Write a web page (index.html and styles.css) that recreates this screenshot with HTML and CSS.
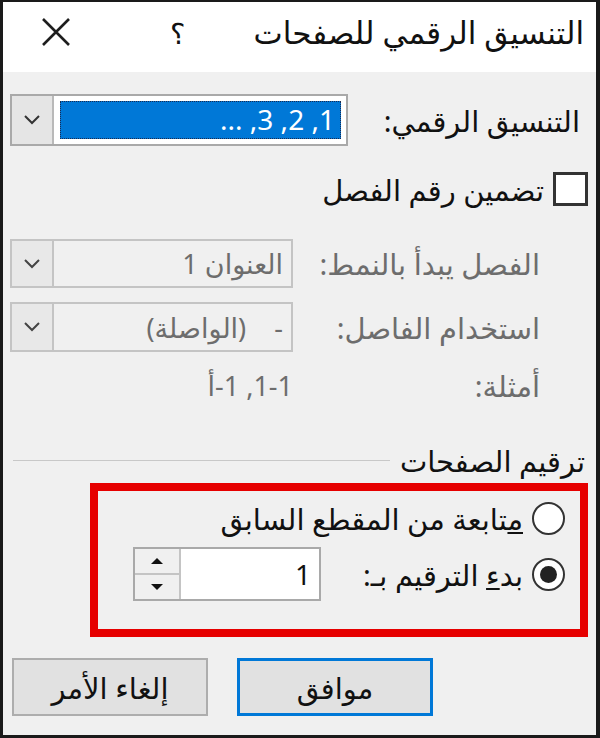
FILE: index.html
```html
<!DOCTYPE html>
<html lang="ar" dir="rtl">
<head>
<meta charset="utf-8">
<title>التنسيق الرقمي للصفحات</title>
<link rel="stylesheet" href="styles.css">
</head>
<body>
<div class="dialog">
  <div class="titlebar">
    <div class="title">التنسيق الرقمي للصفحات</div>
    <div class="tb-actions">
      <span class="help">؟</span>
      <span class="close">
        <svg width="30" height="30" viewBox="0 0 30 30"><path d="M2 2 L28 28 M28 2 L2 28" stroke="#1e1e1e" stroke-width="2.6" fill="none"/></svg>
      </span>
    </div>
  </div>
  <div class="content">
    <div class="row row-format">
      <span class="lbl lbl-main">التنسيق الرقمي:</span>
      <div class="combo combo-wide">
        <div class="combo-field"><span class="sel">1, 2, 3, ...</span></div>
        <div class="combo-btn"><svg width="18" height="12" viewBox="0 0 18 12"><path d="M2 2 L9 9 L16 2" stroke="#333" stroke-width="2" fill="none"/></svg></div>
      </div>
    </div>
    <div class="row check-row">
      <span class="checkbox"></span>
      <span class="check-lbl">تضمين رقم الفصل</span>
    </div>
    <div class="row row-disabled row-style">
      <span class="lbl lbl-dis">الفصل يبدأ بالنمط:</span>
      <div class="combo combo-dis">
        <div class="combo-field"><span class="val">العنوان 1</span></div>
        <div class="combo-btn"><svg width="18" height="12" viewBox="0 0 18 12"><path d="M2 2 L9 9 L16 2" stroke="#444" stroke-width="2" fill="none"/></svg></div>
      </div>
    </div>
    <div class="row row-disabled row-sep">
      <span class="lbl lbl-dis">استخدام الفاصل:</span>
      <div class="combo combo-dis">
        <div class="combo-field"><span class="val">-&nbsp;&nbsp;&nbsp;&nbsp;(الواصلة)</span></div>
        <div class="combo-btn"><svg width="18" height="12" viewBox="0 0 18 12"><path d="M2 2 L9 9 L16 2" stroke="#444" stroke-width="2" fill="none"/></svg></div>
      </div>
    </div>
    <div class="row row-disabled row-examples">
      <span class="lbl lbl-dis">أمثلة:</span>
      <div class="examples">1-1, 1-أ</div>
    </div>
    <div class="section-head">
      <span class="section-lbl">ترقيم الصفحات</span>
      <span class="section-line"></span>
    </div>
    <div class="highlight">
      <div class="radio-row">
        <span class="radio"></span>
        <span class="radio-lbl"><u>م</u>تابعة من المقطع السابق</span>
      </div>
      <div class="radio-row radio-row2">
        <span class="radio radio-on"></span>
        <span class="radio-lbl">بد<u>ء</u> الترقيم بـ:</span>
        <div class="spin">
          <div class="spin-field">1</div>
          <div class="spin-btns">
            <div class="spin-up"><svg width="14" height="8" viewBox="0 0 14 8"><path d="M1 7 L7 1 L13 7 Z" fill="#111"/></svg></div>
            <div class="spin-down"><svg width="14" height="8" viewBox="0 0 14 8"><path d="M1 1 L7 7 L13 1 Z" fill="#111"/></svg></div>
          </div>
        </div>
      </div>
    </div>
    <div class="buttons">
      <button class="btn btn-ok">موافق</button>
      <button class="btn btn-cancel">إلغاء الأمر</button>
    </div>
  </div>
</div>
</body>
</html>
```
FILE: styles.css
```css
* { box-sizing: border-box; }
html, body { margin: 0; padding: 0; }
body {
  width: 600px;
  height: 738px;
  font-family: "Noto Sans", "DejaVu Sans", sans-serif;
  color: #111;
  background: #f0f0f0;
}
.dialog {
  width: 600px;
  height: 738px;
  border: 3px solid #1a1a1a;
  border-top-width: 2px;
  border-right-width: 4px;
  display: flex;
  flex-direction: column;
  background: #f0f0f0;
}
.titlebar {
  height: 70px;
  flex: none;
  background: #fff;
  display: flex;
  align-items: center;
  justify-content: space-between;
  padding-inline-start: 12px;
  padding-inline-end: 38px;
  padding-bottom: 10px;
}
.title {
  font-size: 31px;
  color: #111;
  white-space: nowrap;
}
.tb-actions {
  display: flex;
  align-items: center;
  gap: 99px;
}
.help {
  font-size: 29px;
  color: #111;
}
.close {
  display: flex;
  width: 30px;
  height: 30px;
}
.content {
  flex: 1;
  padding-inline-start: 8px;
  padding-inline-end: 7px;
  display: flex;
  flex-direction: column;
}
.row {
  display: flex;
  align-items: center;
  justify-content: space-between;
}
.lbl { font-size: 29px; white-space: nowrap; }
.lbl-main { margin-inline-start: 8px; }
.lbl-dis { margin-inline-start: 48px; color: #6d6d6d; }
.row-format { margin-top: 22px; height: 52px; }
.combo {
  display: flex;
  height: 100%;
  border: 2px solid #a9a9a9;
  background: #fff;
}
.combo-wide { width: 338px; }
.combo-field {
  flex: 1;
  padding: 5px 5px 5px 6px;
  display: flex;
}
.sel {
  flex: 1;
  background: #0078d7;
  color: #fff;
  font-size: 28px;
  line-height: 36px;
  padding: 0 6px;
  outline: 1px dotted #1b2b50;
  outline-offset: -1px;
  white-space: nowrap;
}
.combo-btn {
  width: 42px;
  flex: none;
  display: flex;
  align-items: center;
  justify-content: center;
  background: #e5e5e5;
  border-inline-start: 2px solid #b9b9b9;
}
.check-row {
  margin-top: 26px;
  height: 34px;
  justify-content: flex-start;
  gap: 9px;
}
.checkbox {
  width: 35px;
  height: 34px;
  border: 3px solid #333;
  background: #fff;
}
.check-lbl { font-size: 29px; white-space: nowrap; }
.row-style { margin-top: 33px; height: 49px; }
.row-sep { margin-top: 14px; height: 50px; }
.combo-dis {
  width: 283px;
  background: #f0f0f0;
  border-color: #c4c4c4;
}
.combo-dis .combo-btn {
  background: #e8e8e8;
  border-inline-start-color: #c4c4c4;
}
.combo-dis .combo-field { align-items: center; padding: 0 8px; }
.val { font-size: 27px; color: #6d6d6d; white-space: pre; }
.row-examples { margin-top: 18px; height: 30px; }
.examples {
  width: 283px;
  font-size: 27px;
  color: #6d6d6d;
  white-space: nowrap;
}
.section-head {
  margin-top: 45px;
  height: 30px;
  display: flex;
  align-items: center;
  gap: 10px;
}
.section-lbl { font-size: 29px; margin-inline-start: 3px; white-space: nowrap; }
.section-line {
  flex: 1;
  height: 1px;
  background: #c8c8c8;
  margin-inline-end: 3px;
}
.highlight {
  margin-top: 8px;
  width: 498px;
  height: 154px;
  border: 8px solid #e60000;
  padding: 10px 15px 0 0;
}
.radio-row {
  display: flex;
  align-items: center;
  gap: 9px;
  height: 34px;
}
.radio-row2 { margin-top: 12px; height: 54px; }
.radio {
  width: 33px;
  height: 33px;
  border-radius: 50%;
  border: 2px solid #333;
  background: #fff;
  flex: none;
  display: flex;
  align-items: center;
  justify-content: center;
}
.radio-on::after {
  content: "";
  width: 17px;
  height: 17px;
  border-radius: 50%;
  background: #222;
}
.radio-lbl { font-size: 29px; white-space: nowrap; }
.spin {
  flex: none;
  margin-inline-start: 33px;
  width: 188px;
  height: 54px;
  display: flex;
  border: 2px solid #a9a9a9;
  background: #fff;
}
.spin-field {
  flex: 1;
  font-size: 28px;
  display: flex;
  align-items: center;
  padding-inline-start: 8px;
}
.spin-btns {
  width: 46px;
  display: flex;
  flex-direction: column;
  border-inline-start: 2px solid #c4c4c4;
  background: #f0f0f0;
}
.spin-up, .spin-down {
  flex: 1;
  display: flex;
  align-items: center;
  justify-content: center;
}
.spin-up { border-bottom: 2px solid #c4c4c4; }
.buttons {
  margin-top: 21px;
  display: flex;
  justify-content: flex-end;
  gap: 29px;
  padding-inline-end: 2px;
}
.btn {
  width: 196px;
  height: 58px;
  font-family: "Noto Sans", "DejaVu Sans", sans-serif;
  font-size: 29px;
  color: #111;
  background: #e1e1e1;
  border: 2px solid #adadad;
  padding: 0;
}
.btn-ok { border: 3px solid #0078d7; }
```
